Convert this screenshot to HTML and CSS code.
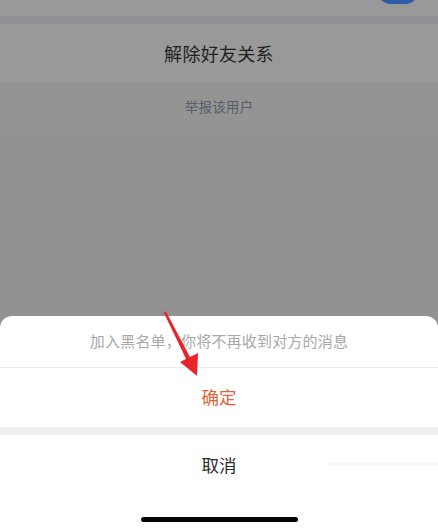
FILE: index.html
```html
<!DOCTYPE html>
<html lang="zh">
<head>
<meta charset="utf-8">
<link rel="stylesheet" href="styles.css">
</head>
<body>
<div class="page">
  <div class="strip-top"><span class="toggle"></span></div>
  <div class="gap"></div>
  <div class="row-main">解除好友关系</div>
  <div class="row-report">举报该用户</div>
  <div class="sheet">
    <div class="sheet-msg">加入黑名单，你将不再收到对方的消息</div>
    <div class="sheet-confirm">确定</div>
    <div class="sheet-sep"></div>
    <div class="sheet-cancel">取消</div>
    <div class="home-area"><span class="home-bar"></span></div>
    <span class="ghost-line"></span>
  </div>
  <svg class="arrow" width="438" height="531" viewBox="0 0 438 531">
    <polygon points="163.5,312 166,311.5 191.5,360 187.5,362" fill="#e8242a"/>
    <polygon points="197,376 180,362 198,353" fill="#e8242a"/>
  </svg>
</div>
</body>
</html>
```
FILE: styles.css
```css
html, body {
  margin: 0;
  padding: 0;
}
body {
  background: #929292;
  font-family: "Noto Sans CJK SC", "Noto Sans", sans-serif;
}
.page {
  position: relative;
  width: 438px;
  height: 531px;
  overflow: hidden;
  display: flex;
  flex-direction: column;
  background: #929292;
}
.strip-top {
  position: relative;
  height: 16px;
  background: #999999;
}
.toggle {
  position: absolute;
  left: 377px;
  top: -24px;
  width: 42px;
  height: 28px;
  border-radius: 14px;
  background: #2c5ea6;
}
.gap {
  height: 8px;
  background: #8f9194;
}
.row-main {
  height: 59px;
  padding-bottom: 2px;
  box-sizing: border-box;
  background: #999999;
  display: flex;
  align-items: center;
  justify-content: center;
  font-size: 18px;
  color: #1f1f1f;
  letter-spacing: 0.3px;
}
.row-report {
  height: 46px;
  display: flex;
  align-items: center;
  justify-content: center;
  font-size: 13.5px;
  color: #545d6a;
  background: #949494;
  letter-spacing: 0.2px;
}
.sheet {
  position: relative;
  margin-top: auto;
  background: #ffffff;
  border-radius: 12px 12px 0 0;
  display: flex;
  flex-direction: column;
}
.sheet-msg {
  height: 52px;
  padding-bottom: 2px;
  box-sizing: border-box;
  display: flex;
  align-items: center;
  justify-content: center;
  font-size: 15px;
  letter-spacing: 0.2px;
  color: #a8a8a8;
  border-bottom: 1px solid #ececec;
}
.sheet-confirm {
  height: 59px;
  padding-bottom: 3px;
  box-sizing: border-box;
  display: flex;
  align-items: center;
  justify-content: center;
  font-size: 17.5px;
  color: #e0633a;
}
.sheet-sep {
  height: 8px;
  background: #efefef;
}
.sheet-cancel {
  height: 60px;
  padding-bottom: 2px;
  box-sizing: border-box;
  display: flex;
  align-items: center;
  justify-content: center;
  font-size: 17.5px;
  color: #2a2a2a;
}
.home-area {
  height: 36px;
  display: flex;
  justify-content: center;
  padding-top: 22px;
  box-sizing: border-box;
}
.home-bar {
  width: 157px;
  height: 5px;
  border-radius: 3px;
  background: #050505;
}
.ghost-line {
  position: absolute;
  left: 328px;
  right: 0;
  top: 147px;
  height: 3px;
  background: linear-gradient(to bottom, #f2f2f2, #fafafa);
  border-radius: 2px 0 0 0;
}
.arrow {
  position: absolute;
  left: 0;
  top: 0;
  pointer-events: none;
}
```
